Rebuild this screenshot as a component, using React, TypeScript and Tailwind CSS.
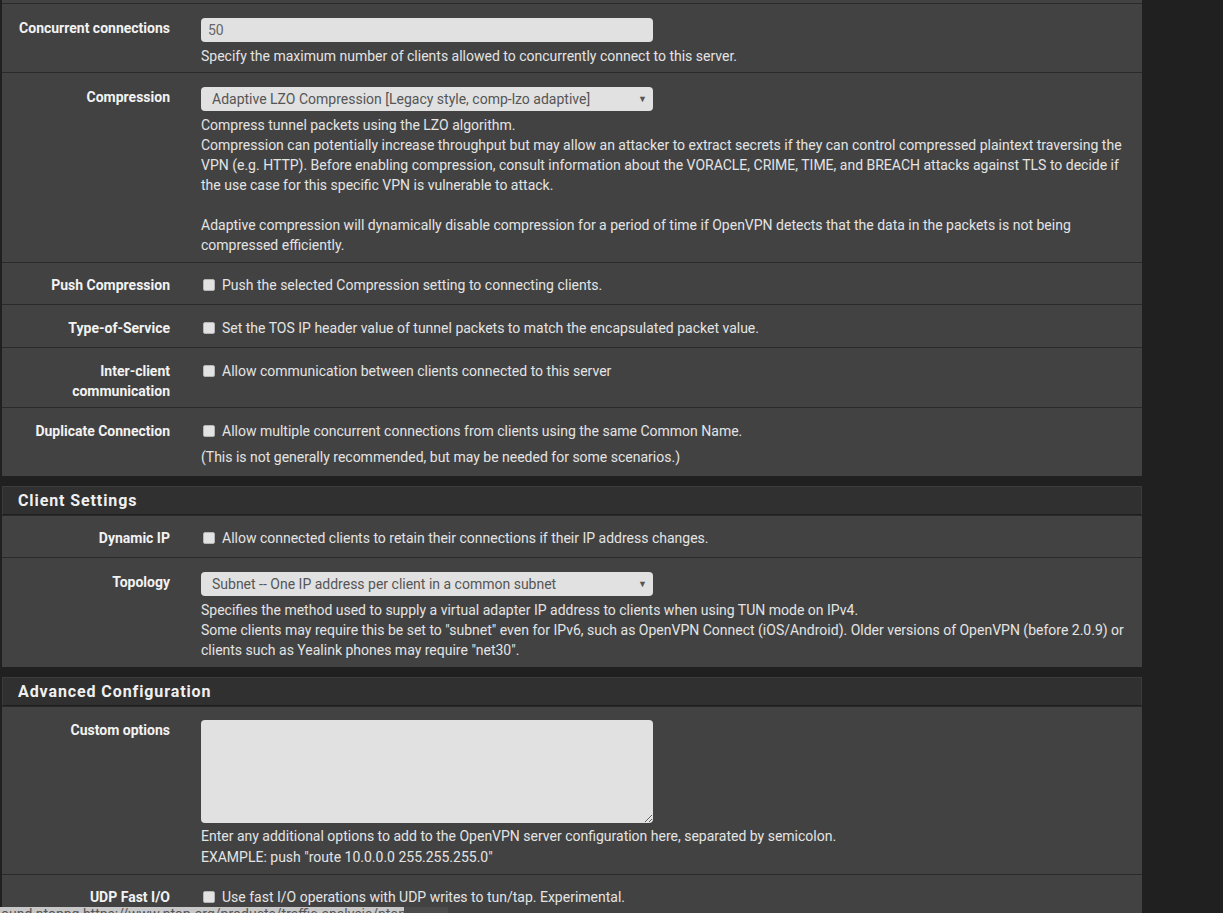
import React from "react";

const font = { fontFamily: "Roboto, 'Liberation Sans', sans-serif" };

function Row({
  label,
  children,
  pt = "pt-[13px]",
  pb = "pb-[9px]",
}: {
  label: React.ReactNode;
  children: React.ReactNode;
  pt?: string;
  pb?: string;
}) {
  return (
    <div className={`flex border-t border-[#2a2a2a] ${pt} ${pb}`}>
      <div className="w-[168px] shrink-0 text-right text-[14px] font-bold leading-[20px] text-[#f2f2f2]">{label}</div>
      <div className="ml-[31px] w-[925px] text-[14px] leading-[20px] text-[#e4e4e4]">{children}</div>
    </div>
  );
}

function Check({ text }: { text: string }) {
  return (
    <div className="flex items-center">
      <span className="ml-[2px] mr-[7px] inline-block h-[12px] w-[12px] rounded-[2px] border border-[#b5b5b5] bg-[#e2e2e2]" />
      <span>{text}</span>
    </div>
  );
}

function Select({ value }: { value: string }) {
  return (
    <div className="flex h-[24px] w-[452px] items-center justify-between rounded-[4px] bg-[#e1e1e1] pl-[11px] pr-[6px] text-[14px] text-[#555]">
      <span>{value}</span>
      <span className="text-[9px] text-[#555]">▼</span>
    </div>
  );
}

function Header({ title }: { title: string }) {
  return (
    <div className="mt-[10px] border border-[#3c3c3c] border-b-[#1e1e1e] bg-[#303030] px-[15px] pt-[1px] text-[16px] font-bold leading-[26px] tracking-[0.9px] text-[#f0f0f0]">
      {title}
    </div>
  );
}

export default function App() {
  return (
    <div className="relative h-[913px] w-[1223px] overflow-hidden bg-[#202020]" style={font}>
      <div className="ml-[2px] w-[1140px]">
        <div className="bg-[#424242] pb-[1px]">
          <div className="h-[3px]" />
          <Row label="Concurrent connections" pt="pt-[14px]" pb="pb-[6px]">
            <div className="flex h-[24px] w-[452px] items-center rounded-[4px] bg-[#e1e1e1] pl-[7px] text-[#666]">50</div>
            <div className="mt-[4px]">Specify the maximum number of clients allowed to concurrently connect to this server.</div>
          </Row>
          <Row label="Compression" pt="pt-[14px]" pb="pb-[7px]">
            <Select value="Adaptive LZO Compression [Legacy style, comp-lzo adaptive]" />
            <div className="mt-[4px] whitespace-nowrap">
              <div>Compress tunnel packets using the LZO algorithm.</div>
              <div>Compression can potentially increase throughput but may allow an attacker to extract secrets if they can control compressed plaintext traversing the</div>
              <div>VPN (e.g. HTTP). Before enabling compression, consult information about the VORACLE, CRIME, TIME, and BREACH attacks against TLS to decide if</div>
              <div>the use case for this specific VPN is vulnerable to attack.</div>
              <div className="h-[20px]" />
              <div>Adaptive compression will dynamically disable compression for a period of time if OpenVPN detects that the data in the packets is not being</div>
              <div>compressed efficiently.</div>
            </div>
          </Row>
          <Row label="Push Compression" pt="pt-[12px]">
            <Check text="Push the selected Compression setting to connecting clients." />
          </Row>
          <Row label="Type-of-Service">
            <Check text="Set the TOS IP header value of tunnel packets to match the encapsulated packet value." />
          </Row>
          <Row label={<>Inter-client<br />communication</>} pb="pb-[6px]">
            <Check text="Allow communication between clients connected to this server" />
          </Row>
          <Row label="Duplicate Connection" pb="pb-[8px]">
            <Check text="Allow multiple concurrent connections from clients using the same Common Name." />
            <div className="mt-[6px]">(This is not generally recommended, but may be needed for some scenarios.)</div>
          </Row>
        </div>

        <Header title="Client Settings" />
        <div className="bg-[#424242]">
          <Row label="Dynamic IP" pt="pt-[12px]" pb="pb-[9px]">
            <Check text="Allow connected clients to retain their connections if their IP address changes." />
          </Row>
          <Row label="Topology" pt="pt-[14px]" pb="pb-[7px]">
            <Select value="Subnet -- One IP address per client in a common subnet" />
            <div className="mt-[4px] whitespace-nowrap">
              <div>Specifies the method used to supply a virtual adapter IP address to clients when using TUN mode on IPv4.</div>
              <div>Some clients may require this be set to "subnet" even for IPv6, such as OpenVPN Connect (iOS/Android). Older versions of OpenVPN (before 2.0.9) or</div>
              <div>clients such as Yealink phones may require "net30".</div>
            </div>
          </Row>
        </div>

        <Header title="Advanced Configuration" />
        <div className="bg-[#424242]">
          <Row label="Custom options" pt="pt-[13px]" pb="pb-[6px]">
            <textarea
              className="block h-[103px] w-[452px] rounded-[4px] bg-[#e1e1e1] outline-none"
              defaultValue=""
            />
            <div className="mt-[3px] leading-[21px]">
              <div>Enter any additional options to add to the OpenVPN server configuration here, separated by semicolon.</div>
              <div>EXAMPLE: push "route 10.0.0.0 255.255.255.0"</div>
            </div>
          </Row>
          <Row label="UDP Fast I/O" pt="pt-[12px]" pb="pb-[20px]">
            <Check text="Use fast I/O operations with UDP writes to tun/tap. Experimental." />
          </Row>
        </div>
      </div>

      <div className="absolute bottom-0 left-0 flex h-[6px] items-start">
        <div className="h-[6px] w-[404px] overflow-hidden bg-[#c8c8c8]">
          <div className="-mt-[3px] whitespace-nowrap pl-[1px] text-[14px] leading-[20px] text-[#555]">ound ntopng https://www.ntop.org/products/traffic-analysis/ntop/ 11</div>
        </div>
        <div className="h-[6px] w-[44px] bg-[#4c4c4c]" />
      </div>
    </div>
  );
}
